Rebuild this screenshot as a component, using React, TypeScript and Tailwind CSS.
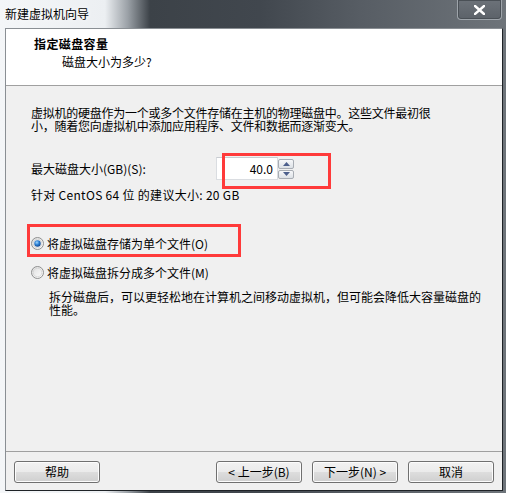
import React from "react";

const font = {
  fontFamily: '"Noto Sans CJK SC", "Microsoft YaHei", "Liberation Sans", sans-serif',
};

function Radio({ checked }: { checked?: boolean }) {
  return (
    <svg width="13" height="13" viewBox="0 0 13 13" className="shrink-0">
      <defs>
        <linearGradient id={checked ? "rg1" : "rg0"} x1="0" y1="0" x2="1" y2="1">
          <stop offset="0" stopColor="#dcdcdc" />
          <stop offset="1" stopColor="#ffffff" />
        </linearGradient>
        <radialGradient id="dot" cx="0.4" cy="0.35" r="0.7">
          <stop offset="0" stopColor="#9fd6ff" />
          <stop offset="0.5" stopColor="#2a7fd4" />
          <stop offset="1" stopColor="#0f3f86" />
        </radialGradient>
      </defs>
      <circle cx="6.5" cy="6.5" r="6" fill={`url(#${checked ? "rg1" : "rg0"})`} stroke="#8e8f8f" />
      <circle cx="6.5" cy="6.5" r="4.3" fill="none" stroke="#d2d2d2" strokeWidth="0.8" />
      {checked ? <circle cx="6.5" cy="6.5" r="3.2" fill="url(#dot)" /> : null}
    </svg>
  );
}

function Spinner() {
  return (
    <div className="mt-[2px] flex h-[20px] w-[16px] flex-col gap-[1px]">
      {["up", "down"].map((dir) => (
        <div
          key={dir}
          className="flex h-[10px] w-[16px] items-center justify-center rounded-[2px] border border-[#a8adb4] bg-gradient-to-b from-[#f7f8fa] to-[#dde1e6]"
        >
          <svg width="7" height="4" viewBox="0 0 7 4">
            {dir === "up" ? (
              <path d="M0 4 L3.5 0 L7 4 Z" fill="#4c5f8c" />
            ) : (
              <path d="M0 0 L3.5 4 L7 0 Z" fill="#4c5f8c" />
            )}
          </svg>
        </div>
      ))}
    </div>
  );
}

function WinButton({ label }: { label: string }) {
  return (
    <button className="flex h-[22px] w-[86px] items-center justify-center rounded-[3px] border border-[#707070] bg-[linear-gradient(to_bottom,#f2f2f2_0%,#ebebeb_48%,#dddddd_52%,#cfcfcf_100%)] text-[12px] leading-none text-black shadow-[inset_0_0_0_1px_#fcfcfc]">
      {label}
    </button>
  );
}

export default function App() {
  return (
    <div
      className="relative flex h-[493px] w-[506px] flex-col overflow-hidden bg-[linear-gradient(to_right,#f4f6f8_0px,#eceff2_105px,#9aa0a6_128px,#3c4248_150px,#41474e_260px,#575d64_360px,#6e747a_506px)] text-black"
      style={font}
    >
      <div className="relative flex h-[28px] shrink-0 items-center pl-[5px]">
        <span className="text-[12px] text-black [text-shadow:0_0_6px_#ffffff]">新建虚拟机向导</span>
        <div className="absolute right-[4px] top-0 flex h-[20px] w-[45px] items-center justify-center rounded-b-[4px] border border-t-0 border-[#9ea4aa] bg-[linear-gradient(to_bottom,#6c7279,#5c6269)] shadow-[inset_0_0_0_1px_#4a5056]">
          <svg width="11" height="10" viewBox="0 0 11 10">
            <path d="M1 1 L10 9 M10 1 L1 9" stroke="#ffffff" strokeWidth="2.4" strokeLinecap="square" />
          </svg>
        </div>
      </div>

      <div className="ml-[5px] mr-[3px] flex h-[463px] flex-col border border-b-[#1e2226] border-l-[#8a8f94] border-r-[#1e2226] border-t-[#8a8f94] bg-[#f0f0f0]">
        <div className="h-[57px] shrink-0 border-b border-[#a0a0a0] bg-white pt-[7px]">
          <div className="pl-[28px] text-[12px] font-bold leading-[15px] tracking-[0.4px]">指定磁盘容量</div>
          <div className="mt-[3px] pl-[56px] text-[12px] leading-[15px]">磁盘大小为多少?</div>
        </div>

        <div className="flex-1 pl-[25px] text-[12px]">
          <p className="pt-[20px] leading-[13px] tracking-[-0.25px]">
            虚拟机的硬盘作为一个或多个文件存储在主机的物理磁盘中。这些文件最初很
            <br />
            小，随着您向虚拟机中添加应用程序、文件和数据而逐渐变大。
          </p>

          <div className="mt-[25px] flex h-[23px] items-start">
            <span className="w-[185px] self-center leading-[15px]">最大磁盘大小(GB)(S):</span>
            <div className="flex h-[23px] w-[62px] items-center justify-end border border-[#dadde1] border-t-[#c9ccd1] bg-white pr-[4px] leading-none">
              40.0
            </div>
            <Spinner />
          </div>

          <div className="mt-[7px] leading-[15px] tracking-[0.3px]">针对 CentOS 64 位 的建议大小: 20 GB</div>

          <label className="mt-[34px] flex h-[15px] items-center gap-[3px]">
            <Radio checked />
            <span className="leading-[15px]">将虚拟磁盘存储为单个文件(O)</span>
          </label>
          <label className="mt-[14px] flex h-[15px] items-center gap-[3px]">
            <Radio />
            <span className="leading-[15px]">将虚拟磁盘拆分成多个文件(M)</span>
          </label>
          <p className="mt-[10px] pl-[18px] leading-[13px]">
            拆分磁盘后，可以更轻松地在计算机之间移动虚拟机，但可能会降低大容量磁盘的
            <br />
            性能。
          </p>
        </div>

        <div className="flex h-[39px] shrink-0 items-start border-t border-[#a0a0a0] px-[8px] pt-[9px]">
          <WinButton label="帮助" />
          <div className="ml-auto flex gap-[10px]">
            <WinButton label="< 上一步(B)" />
            <WinButton label="下一步(N) >" />
            <WinButton label="取消" />
          </div>
        </div>
      </div>

      <div className="pointer-events-none absolute left-[222px] top-[153px] h-[36px] w-[109px] border-[3px] border-[#ff3a3a]" />
      <div className="pointer-events-none absolute left-[27px] top-[224px] h-[33px] w-[214px] border-[3px] border-[#ff3a3a]" />
    </div>
  );
}
